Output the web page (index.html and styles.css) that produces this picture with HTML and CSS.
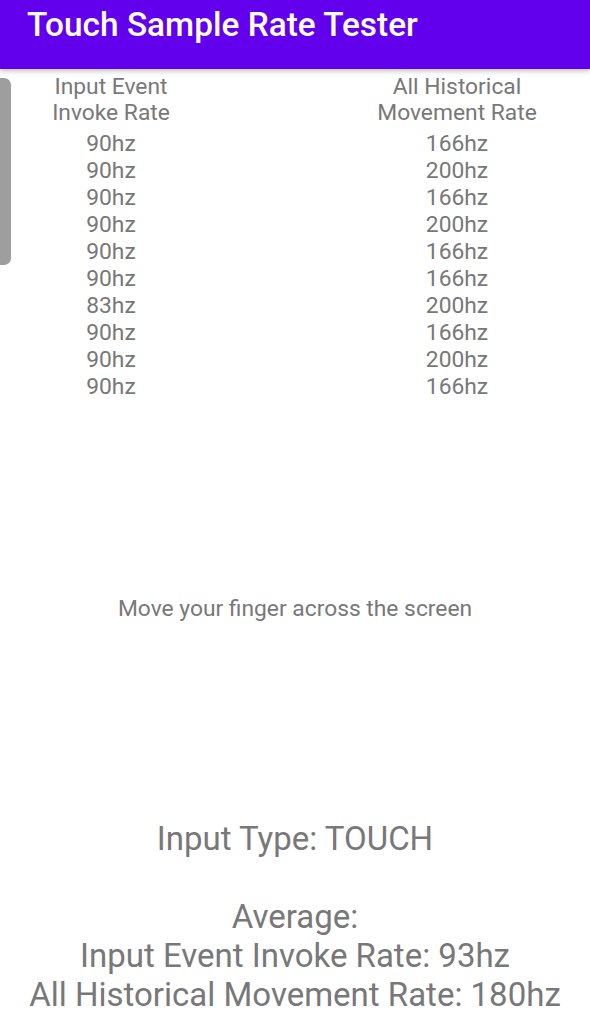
FILE: index.html
```html
<!DOCTYPE html>
<html lang="en">
<head>
    <meta charset="UTF-8">
    <meta name="viewport" content="width=device-width, initial-scale=1.0">
    <title>Touch Sample Rate Tester</title>
    <link rel="stylesheet" href="styles.css">
</head>
<body>
    <header class="toolbar">
        <h1>Touch Sample Rate Tester</h1>
    </header>

    <div class="scroll-handle"></div>

    <main class="content">
        <div class="rates">
            <div class="col col-left">
                <div class="col-title">Input Event<br>Invoke Rate</div>
                <div>90hz</div>
                <div>90hz</div>
                <div>90hz</div>
                <div>90hz</div>
                <div>90hz</div>
                <div>90hz</div>
                <div>83hz</div>
                <div>90hz</div>
                <div>90hz</div>
                <div>90hz</div>
            </div>
            <div class="col col-right">
                <div class="col-title">All Historical<br>Movement Rate</div>
                <div>166hz</div>
                <div>200hz</div>
                <div>166hz</div>
                <div>200hz</div>
                <div>166hz</div>
                <div>166hz</div>
                <div>200hz</div>
                <div>166hz</div>
                <div>200hz</div>
                <div>166hz</div>
            </div>
        </div>

        <p class="hint">Move your finger across the screen</p>

        <div class="summary">
            <p class="input-type">Input Type: TOUCH</p>
            <p class="average">Average:<br>Input Event Invoke Rate: 93hz<br>All Historical Movement Rate: 180hz</p>
        </div>
    </main>
</body>
</html>
```

FILE: styles.css
```css
* {
    margin: 0;
    padding: 0;
    box-sizing: border-box;
}

body {
    width: 590px;
    height: 1024px;
    background: #ffffff;
    font-family: Roboto, "Noto Sans", sans-serif;
    color: #787878;
    overflow: hidden;
    position: relative;
}

.toolbar {
    height: 69px;
    background: #6200ee;
    padding-left: 27px;
    box-shadow: 0 2px 5px rgba(0, 0, 0, 0.25);
    position: relative;
    z-index: 2;
}

.toolbar h1 {
    color: #ffffff;
    font-size: 33.4px;
    font-weight: 500;
    line-height: 50px;
}

/* barra gris del lado izquierdo */
.scroll-handle {
    position: absolute;
    left: 0;
    top: 78px;
    width: 11px;
    height: 187px;
    background: #9e9e9e;
    border-radius: 0 7px 7px 0;
}

.rates {
    display: grid;
    grid-template-columns: 222px 1fr 266px;
    padding-top: 5px;
    font-size: 22.8px;
    line-height: 27px;
    text-align: center;
}

.col-left {
    grid-column: 1;
}

.col-right {
    grid-column: 3;
}

.col-title {
    line-height: 26px;
    margin-bottom: 4px;
}

.hint {
    text-align: center;
    font-size: 22.8px;
    margin-top: 194px;
    line-height: 30px;
}

.summary {
    text-align: center;
    font-size: 33px;
    line-height: 39px;
    margin-top: 195px;
}

.input-type {
    margin-bottom: 39px;
}
```
